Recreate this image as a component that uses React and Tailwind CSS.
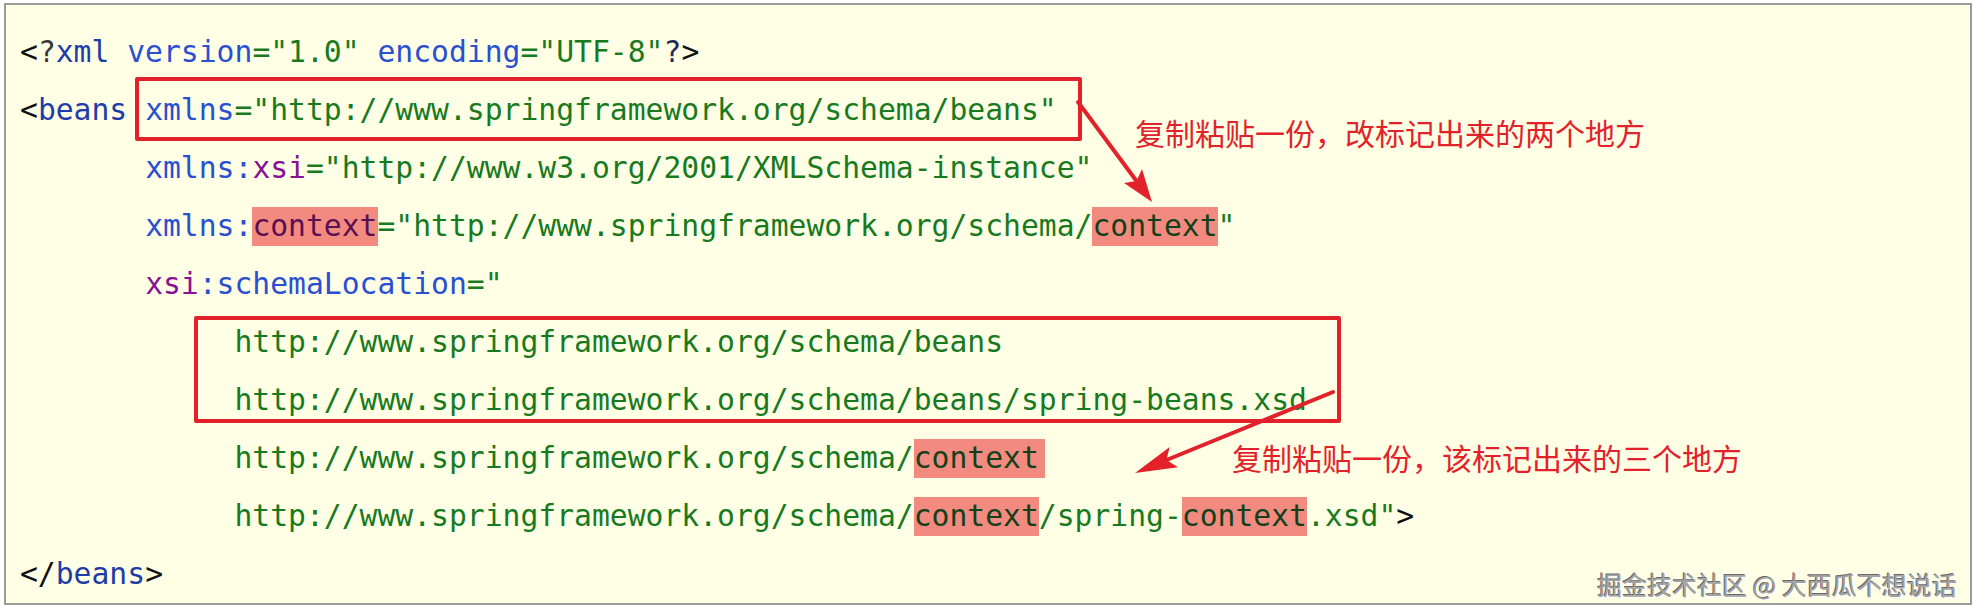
import React from "react";

const K = ({ children }) => <span className="text-[#111111]">{children}</span>;
const T = ({ children }) => <span className="text-[#1e3ca8]">{children}</span>;
const A = ({ children }) => <span className="text-[#2a4fd0]">{children}</span>;
const P = ({ children }) => <span className="text-[#871094]">{children}</span>;
const G = ({ children }) => <span className="text-[#187a1e]">{children}</span>;
const HP = ({ children }) => (
  <span className="bg-[#f28a80] text-[#5a1050] pt-[1px] pb-[3px]">{children}</span>
);
const HG = ({ children, extra = "" }) => (
  <span className={"bg-[#f28a80] text-[#12401a] pt-[1px] pb-[3px] " + extra}>{children}</span>
);

export default function App() {
  return (
    <div className="w-[1974px] h-[612px] bg-white pt-[3px] pl-[4px]">
      <div className="relative w-[1968px] h-[602px] border-2 border-[#9c9c9c] bg-[#ffffe6]">
        <div className="pt-[18px] pl-[14px] font-['DejaVu_Sans_Mono',monospace] text-[29.7px] leading-[58px] whitespace-pre">
          <div>
            <K>{"<"}</K><span className="text-[#3a3a3a]">?</span><T>xml</T> <A>version</A><G>{'="1.0"'}</G> <A>encoding</A><G>{'="UTF-8"'}</G><span className="text-[#222a55]">?</span><K>{">"}</K>
          </div>
          <div>
            <K>{"<"}</K><T>beans</T> <A>xmlns</A><G>{'="http://www.springframework.org/schema/beans"'}</G>
          </div>
          <div>
            {"       "}<A>xmlns:</A><P>xsi</P><G>{'="http://www.w3.org/2001/XMLSchema-instance"'}</G>
          </div>
          <div>
            {"       "}<A>xmlns:</A><HP>context</HP><G>{'="http://www.springframework.org/schema/'}</G><HG>context</HG><G>{'"'}</G>
          </div>
          <div>
            {"       "}<P>xsi</P><A>:schemaLocation</A><G>{'="'}</G>
          </div>
          <div>
            {"            "}<G>http://www.springframework.org/schema/beans</G>
          </div>
          <div>
            {"            "}<G>http://www.springframework.org/schema/beans/spring-beans.xsd</G>
          </div>
          <div>
            {"            "}<G>http://www.springframework.org/schema/</G><HG extra="pr-[6px]">context</HG>
          </div>
          <div>
            {"            "}<G>http://www.springframework.org/schema/</G><HG>context</HG><G>/spring-</G><HG>context</HG><G>{'.xsd"'}</G><K>{">"}</K>
          </div>
          <div>
            <K>{"</"}</K><T>beans</T><K>{">"}</K>
          </div>
        </div>

        {/* red annotation boxes */}
        <div className="absolute left-[129px] top-[72px] w-[947px] h-[64px] border-4 border-[#e3212a] rounded-[2px]" />
        <div className="absolute left-[188px] top-[311px] w-[1147px] h-[107px] border-4 border-[#e3212a] rounded-[2px]" />

        {/* arrows */}
        <svg className="absolute left-0 top-0 pointer-events-none" width="1964" height="598" viewBox="0 0 1964 598">
          <line x1="1072" y1="97" x2="1130.5" y2="176" stroke="#e3212a" strokeWidth="4" strokeLinecap="round" />
          <polygon points="1146,197 1118,178 1130.5,176 1136,164" fill="#e3212a" />
          <line x1="1327" y1="387" x2="1160.5" y2="455" stroke="#e3212a" strokeWidth="4" strokeLinecap="round" />
          <polygon points="1129,468 1163.7,441.9 1160.5,455 1172.1,462.3" fill="#e3212a" />
        </svg>

        {/* annotation texts */}
        <div className="absolute left-[1129px] top-[112px] text-[30px] leading-[30px] text-[#e3212a] whitespace-nowrap font-['Noto_Sans_CJK_SC',sans-serif]">
          复制粘贴一份，改标记出来的两个地方
        </div>
        <div className="absolute left-[1226px] top-[437px] text-[30px] leading-[30px] text-[#e3212a] whitespace-nowrap font-['Noto_Sans_CJK_SC',sans-serif]">
          复制粘贴一份，该标记出来的三个地方
        </div>

        {/* watermark */}
        <div className="absolute right-[13px] top-[567px] text-[25px] leading-[25px] text-[#a4a4a4] whitespace-nowrap font-['Noto_Sans_CJK_SC',sans-serif] [text-shadow:-1px_-1px_0_#6a6a6a,1px_1px_0_#ffffff]">
          掘金技术社区 @ 大西瓜不想说话
        </div>
      </div>
    </div>
  );
}
